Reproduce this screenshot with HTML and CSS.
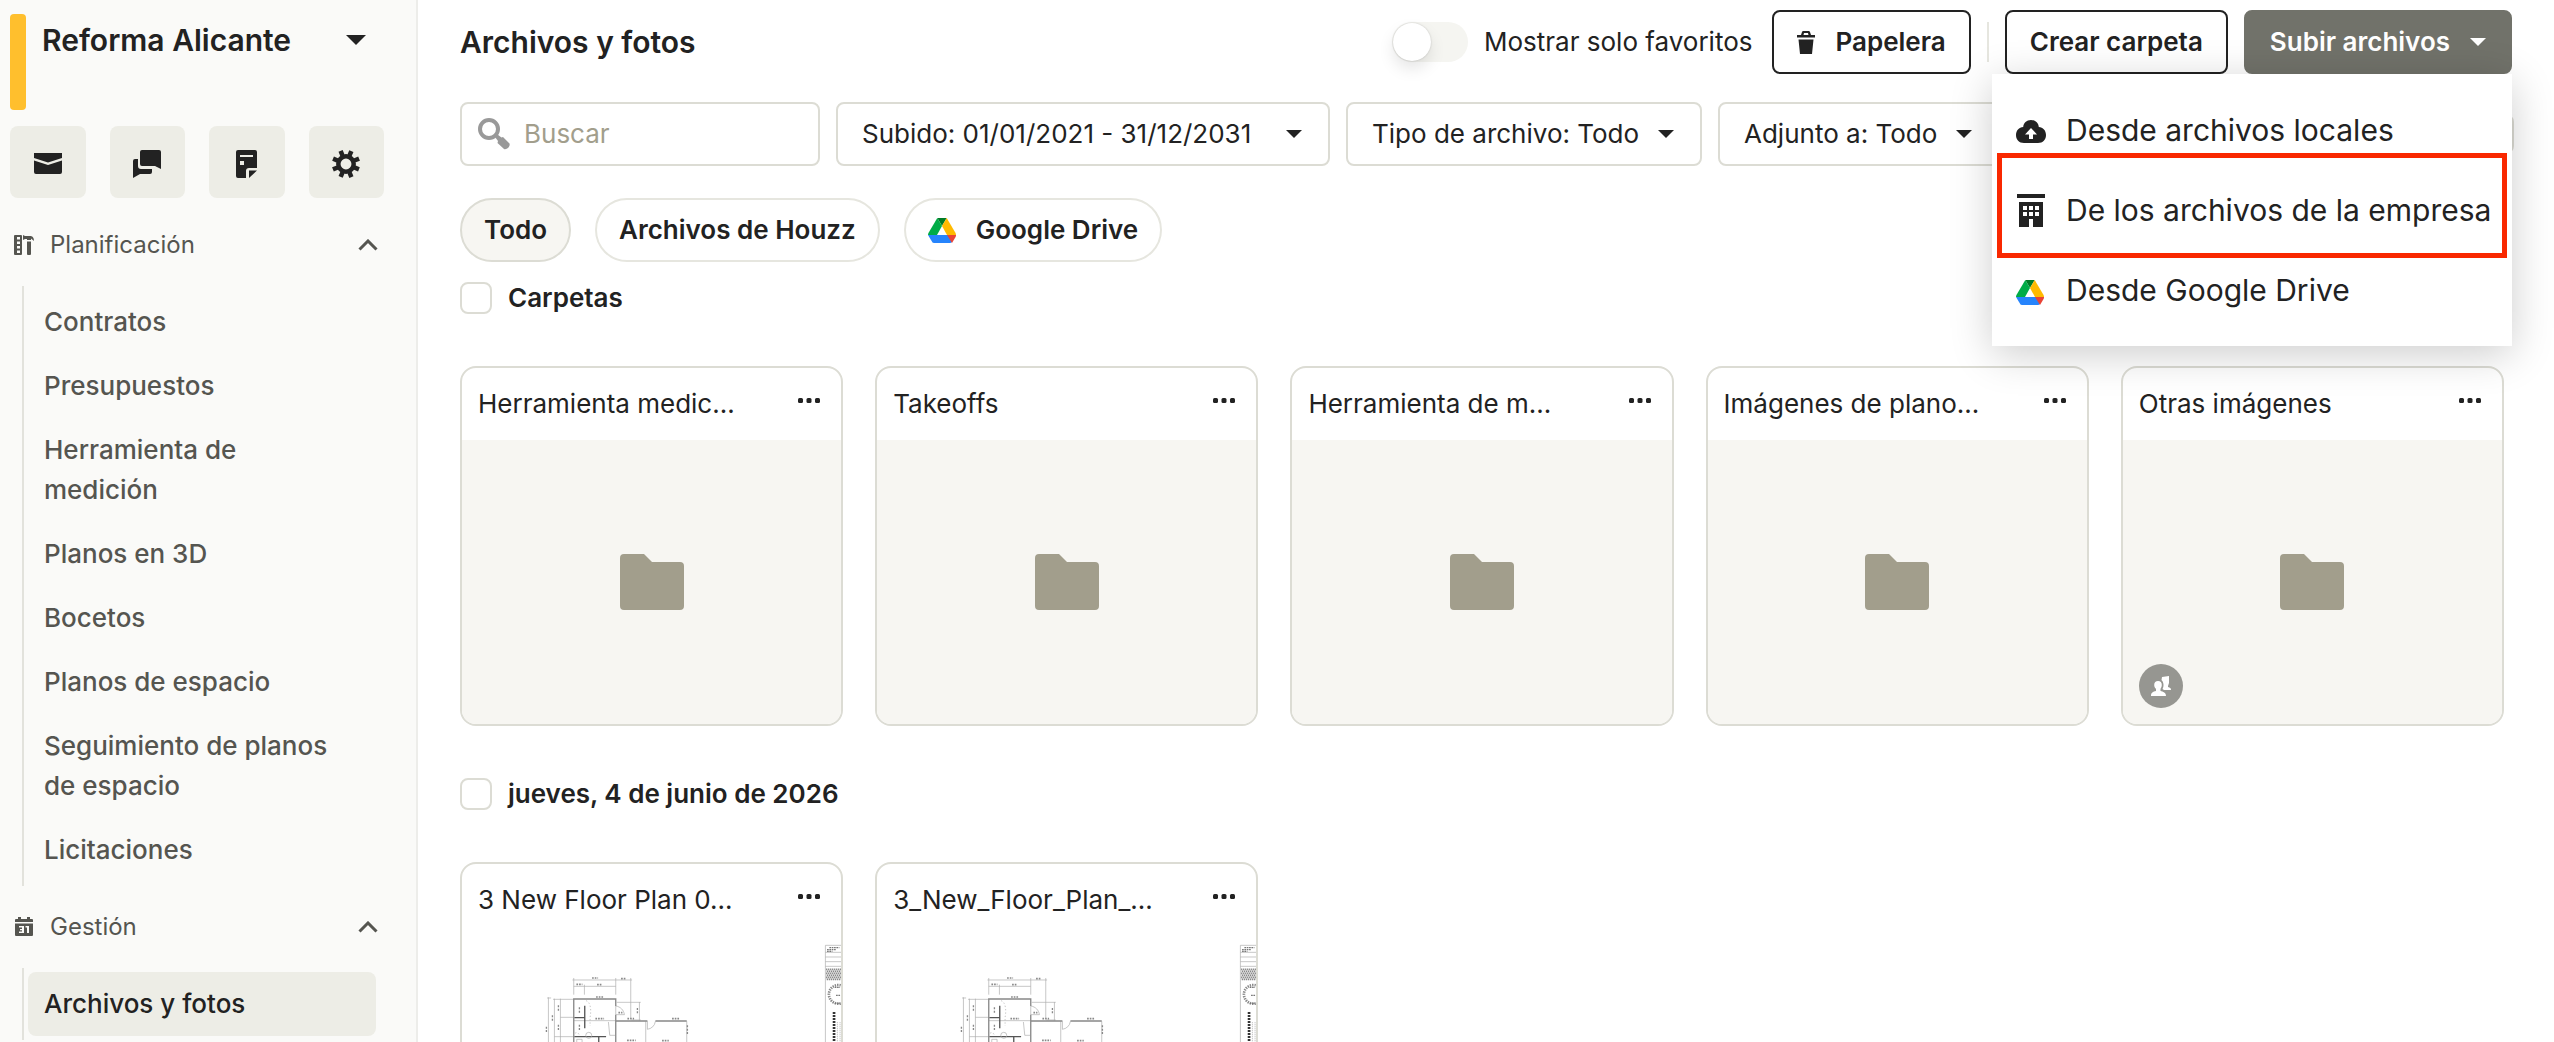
FILE: index.html
```html
<!DOCTYPE html>
<html lang="es">
<head>
    <meta charset="UTF-8">
    <meta name="viewport" content="width=device-width, initial-scale=1.0">
    <title>Archivos y fotos</title>
    <link rel="stylesheet" href="styles.css">
</head>
<body>
    <!-- Shared icons -->
    <svg class="sprite" aria-hidden="true">
        <symbol id="caret" viewBox="0 0 20 10"><path d="M0 0h20L10 10z"/></symbol>
        <symbol id="chevron-up" viewBox="0 0 20 12"><path d="M1.500 10.500L10 2l8.500 8.500" fill="none" stroke="currentColor" stroke-width="3"/></symbol>
        <symbol id="dots" viewBox="0 0 22 6"><rect width="5" height="5" rx="1.500"/><rect x="8.500" width="5" height="5" rx="1.500"/><rect x="17" width="5" height="5" rx="1.500"/></symbol>
        <symbol id="folder" viewBox="0 0 64 56"><path d="M4 0h20l8 8h28a4 4 0 0 1 4 4v40a4 4 0 0 1-4 4H4a4 4 0 0 1-4-4V4a4 4 0 0 1 4-4z"/></symbol>
        <symbol id="drive" viewBox="0 0 28 25">
            <path fill="#007a26" d="M9.300 0h9.400L14 8z"/>
            <path fill="#ffba00" d="M18.700 0l8.700 14.700c.4.700.6 1.300.6 2.300h-9L14 8z"/>
            <path fill="#00ac47" d="M9.300 0L14 8 9 17H0c0-1 .2-1.600.6-2.300z"/>
            <path fill="#2684fc" d="M0 17h28l-4.500 7.500c-.3.300-.7.500-1.500.5H6c-.8 0-1.200-.2-1.500-.5z"/>
            <path fill="#ea4335" d="M19 17h9c0 1-.2 1.500-.6 2.200L24 25z"/>
        </symbol>
        <symbol id="plan" viewBox="0 0 379 284">
            <g transform="scale(.3333) translate(-66 -528)" fill="none" stroke="#aaa" stroke-width="2">
                <path d="M401 654v50M527 654v50M572 654v120M433 674v30M397 660h179M401 679h126M325 712v140M343 716v140M361 716v140M321 714h12M339 718h62M361 772h40M343 830h58M598 726v56M530 727h72M574 780h28"/>
                <path d="M527 738v26h26c-2-14-12-24-26-26M622 784v24c12-2 22-10 24-24M505 786l4 40h16M740 784v62M617 784v62"/>
                <path d="M401 782h126"/>
                <path stroke="#888" stroke-width="4" d="M401 852V717h126v21M527 764v82M527 783h95M646 783h94"/>
                <path stroke="#555" stroke-width="4" d="M434 737v68M403 773h30M403 830h95M476 830v20"/>
                <path stroke="#888" stroke-width="5" stroke-dasharray="5 3" d="M456 654h18M543 656h14M409 673h18M471 674h16M468 711h22M466 776h26M562 776h20M696 776h22M561 841h26M666 842h20M535 758h12"/>
                <path stroke="#888" stroke-width="4" stroke-dasharray="6 4" d="M319 800v18M337 766v18M355 736v20M355 794v18M592 744v20M742 796v26M418 742v18M418 794v18"/>
                <path stroke-dasharray="4 6" d="M438 722c14 4 16 30 12 50v26M405 820c4-4 10-2 12 4"/>
                <circle cx="446" cy="826" r="9"/>
                <path d="M410 838h16v10h-16z"/>
                <path d="M1206 556h-50v296M1156 577h50M1156 591h50M1156 605h50M1156 619h50"/>
                <path stroke="#777" stroke-width="4" stroke-dasharray="5 2" d="M1168 563h30M1161 569h26M1161 574h16"/>
                <path stroke="#888" stroke-width="5" stroke-dasharray="4 2" d="M1158 628h48M1160 634h46M1158 640h48M1160 646h46M1158 652h48M1160 658h46"/>
                <path stroke="#888" stroke-width="8" stroke-dasharray="4 3" d="M1202 676a28 28 0 1 0 0 54"/>
                <path stroke="#777" stroke-width="4" stroke-dasharray="5 2" d="M1184 682h16M1188 706h14M1184 730h16"/>
                <path stroke="#333" stroke-width="8" stroke-dasharray="6 3" d="M1182 756v90"/>
                <path stroke-dasharray="4 2" d="M1192 786v60M1200 786v60"/>
            </g>
        </symbol>
    </svg>

    <div class="app">
        <aside class="sidebar">
            <div class="project">
                <span class="project-color"></span>
                <button class="project-name">
                    Reforma Alicante
                    <svg class="caret-large"><use href="#caret"/></svg>
                </button>
            </div>

            <div class="shortcuts">
                <button class="shortcut" aria-label="Correo">
                    <svg viewBox="0 0 28 28"><path d="M0 3h28v5l-14 4.500L0 8z"/><path d="M0 10.500L14 15l14-4.500V22a2 2 0 0 1-2 2H2a2 2 0 0 1-2-2z"/></svg>
                </button>
                <button class="shortcut" aria-label="Mensajes">
                    <svg viewBox="0 0 28 28"><path d="M9 0h17a2 2 0 0 1 2 2v17l-6-3H9a2 2 0 0 1-2-2V2a2 2 0 0 1 2-2z"/><path d="M5 9v7a3 3 0 0 0 3 3h11v3a2 2 0 0 1-2 2H7l-7 4V11a2 2 0 0 1 2-2z"/></svg>
                </button>
                <button class="shortcut" aria-label="Notas">
                    <svg viewBox="0 0 28 28"><path fill-rule="evenodd" d="M5 0h17a2 2 0 0 1 2 2v16h-8a3 3 0 0 0-3 3v7H5a2 2 0 0 1-2-2V2a2 2 0 0 1 2-2zM7 5v2h13V5zM7 11v4h4v-4z"/><path d="M16 20.500h8L16 28z"/></svg>
                </button>
                <button class="shortcut" aria-label="Ajustes">
                    <svg viewBox="0 0 28 28"><circle cx="14" cy="14" r="7.700" fill="none" stroke="currentColor" stroke-width="4.500"/><g fill="none" stroke="currentColor" stroke-width="4.500"><path d="M14 5V0M14 23v5M5 14H0M23 14h5M7.600 7.600L4 4M20.400 7.600L24 4M7.600 20.400L4 24M20.400 20.400L24 24" transform="rotate(22.500 14 14)"/></g></svg>
                </button>
            </div>

            <nav>
                <button class="section-head">
                    <svg class="section-icon" viewBox="0 0 20 20"><path fill-rule="evenodd" d="M1 0h6a1 1 0 0 1 1 1v18a1 1 0 0 1-1 1H1a1 1 0 0 1-1-1V1a1 1 0 0 1 1-1zM3 2v2.500h3V2zM3 6.500V9h3V6.500zM3 11v2.500h3V11zM3 15.500V18h3v-2.500z"/><path d="M9 0l2 1h5c2 0 4 1 4 5l-3-2.500V5h-4V4h-2L9 5zM13 6.500h4V19a1 1 0 0 1-1 1h-2a1 1 0 0 1-1-1z"/></svg>
                    Planificación
                    <svg class="chevron"><use href="#chevron-up"/></svg>
                </button>
                <ul class="section-items">
                    <li><a href="#">Contratos</a></li>
                    <li><a href="#">Presupuestos</a></li>
                    <li><a href="#">Herramienta de medición</a></li>
                    <li><a href="#">Planos en 3D</a></li>
                    <li><a href="#">Bocetos</a></li>
                    <li><a href="#">Planos de espacio</a></li>
                    <li><a href="#">Seguimiento de planos de espacio</a></li>
                    <li><a href="#">Licitaciones</a></li>
                </ul>

                <button class="section-head">
                    <svg class="section-icon" viewBox="0 0 20 20"><path d="M1 5V3a1 1 0 0 1 1-1h2V0h3v2h6V0h3v2h2a1 1 0 0 1 1 1v2z"/><path fill-rule="evenodd" d="M1 6.500h18V18a1 1 0 0 1-1 1H2a1 1 0 0 1-1-1zM5 9v1.500h3V12H6v1.200h2v1.300H5V16h5V9zM11.500 9v1.500H13V16h2V9z"/></svg>
                    Gestión
                    <svg class="chevron"><use href="#chevron-up"/></svg>
                </button>
                <ul class="section-items">
                    <li><a href="#" class="active">Archivos y fotos</a></li>
                </ul>
            </nav>
        </aside>

        <main class="main">
            <header class="topbar">
                <h1>Archivos y fotos</h1>
                <div class="actions">
                    <label class="toggle">
                        <input type="checkbox" role="switch">
                        Mostrar solo favoritos
                    </label>
                    <button class="btn">
                        <svg class="trash" viewBox="0 0 18 23"><path fill-rule="evenodd" d="M0 4h4l1-3a1.500 1.500 0 0 1 1.500-1h5A1.500 1.500 0 0 1 13 1l1 3h4v2.500H0zM6.500 4h5L11 2H7zM1.500 8.500h15L15 23H3z"/></svg>
                        Papelera
                    </button>
                    <span class="divider"></span>
                    <button class="btn">Crear carpeta</button>
                    <div class="upload">
                        <button class="btn btn-primary" aria-expanded="true">
                            Subir archivos
                            <svg class="caret"><use href="#caret"/></svg>
                        </button>
                        <div class="menu">
                            <button class="menu-item">
                                <svg viewBox="0 -2 30 34"><path fill-rule="evenodd" d="M15 5c4.500 0 7.500 3 7.800 7C27 12.500 30 15.500 30 20c0 4.500-3 8-8 8H8c-5 0-8-3.500-8-8 0-4.500 3-7.500 7.200-8C7.500 8 10.500 5 15 5zM15 13l-6 6.500h4V24h4v-4.500h4z"/></svg>
                                Desde archivos locales
                            </button>
                            <button class="menu-item highlighted">
                                <svg viewBox="0 0 30 34"><path fill-rule="evenodd" d="M1 1h28v4H1zM3 9h24v25H17v-8h-4v8H3zM7 13v4h4v-4zM13 13v4h4v-4zM19 13v4h4v-4zM7 19v4h4v-4zM13 19v4h4v-4zM19 19v4h4v-4z"/></svg>
                                De los archivos de la empresa
                            </button>
                            <button class="menu-item">
                                <svg viewBox="0 -7 30 34"><use href="#drive" width="28" height="25"/></svg>
                                Desde Google Drive
                            </button>
                        </div>
                    </div>
                </div>
            </header>

            <div class="filters">
                <label class="search">
                    <svg viewBox="0 0 32 32"><circle cx="11" cy="11" r="9" fill="none" stroke="currentColor" stroke-width="4"/><path d="M17 19l2.500-2.500 4 3 1.500-.5 6.500 6.500c1 3-2.500 6.500-5.500 5.500L19.500 25l.5-2z"/></svg>
                    <input type="text" placeholder="Buscar" aria-label="Buscar">
                </label>
                <select class="filter filter-date" aria-label="Subido">
                    <option>Subido: 01/01/2021 - 31/12/2031</option>
                </select>
                <select class="filter" aria-label="Tipo de archivo">
                    <option>Tipo de archivo: Todo</option>
                </select>
                <select class="filter" aria-label="Adjunto a">
                    <option>Adjunto a: Todo</option>
                </select>
                <button class="view-mode" aria-label="Vista"></button>
            </div>

            <div class="chips">
                <button class="chip selected">Todo</button>
                <button class="chip">Archivos de Houzz</button>
                <button class="chip"><svg><use href="#drive"/></svg>Google Drive</button>
            </div>

            <label class="group-title"><input type="checkbox">Carpetas</label>
            <div class="cards">
                <article class="card">
                    <div class="card-head">Herramienta medic...<button class="more" aria-label="Más"><svg><use href="#dots"/></svg></button></div>
                    <div class="card-body"><svg class="folder"><use href="#folder"/></svg></div>
                </article>
                <article class="card">
                    <div class="card-head">Takeoffs<button class="more" aria-label="Más"><svg><use href="#dots"/></svg></button></div>
                    <div class="card-body"><svg class="folder"><use href="#folder"/></svg></div>
                </article>
                <article class="card">
                    <div class="card-head">Herramienta de m...<button class="more" aria-label="Más"><svg><use href="#dots"/></svg></button></div>
                    <div class="card-body"><svg class="folder"><use href="#folder"/></svg></div>
                </article>
                <article class="card">
                    <div class="card-head">Imágenes de plano...<button class="more" aria-label="Más"><svg><use href="#dots"/></svg></button></div>
                    <div class="card-body"><svg class="folder"><use href="#folder"/></svg></div>
                </article>
                <article class="card">
                    <div class="card-head">Otras imágenes<button class="more" aria-label="Más"><svg><use href="#dots"/></svg></button></div>
                    <div class="card-body">
                        <svg class="folder"><use href="#folder"/></svg>
                        <span class="shared"><svg viewBox="0 0 20 20"><path d="M7 5c2.500 0 3.800 1.500 3.800 4 0 2-.8 3-1.300 3.800V15c2.500.5 5.500 1.500 5.500 5H0c0-3.500 2-4.500 5-5v-2.200C4 12 3.200 11 3.200 9c0-2.500 1.500-4 3.800-4z"/><path d="M11 1l7-1v7l-1 3v1c2 .5 3 1 3 3h-7l-1.500-1C13 11 13 6 10.500 4z"/></svg></span>
                    </div>
                </article>
            </div>

            <label class="group-title"><input type="checkbox">jueves, 4 de junio de 2026</label>
            <div class="cards">
                <article class="card">
                    <div class="card-head">3 New Floor Plan 0...<button class="more" aria-label="Más"><svg><use href="#dots"/></svg></button></div>
                    <div class="card-body card-image"><svg class="plan"><use href="#plan"/></svg></div>
                </article>
                <article class="card">
                    <div class="card-head">3_New_Floor_Plan_...<button class="more" aria-label="Más"><svg><use href="#dots"/></svg></button></div>
                    <div class="card-body card-image"><svg class="plan"><use href="#plan"/></svg></div>
                </article>
            </div>
        </main>
    </div>
</body>
</html>
```

FILE: styles.css
```css
* {
    box-sizing: border-box;
}

body {
    margin: 0;
    font-family: Inter, "Liberation Sans", sans-serif;
    font-size: 26px;
    line-height: 40px;
    color: #222;
    background: #fff;
}

button, input, select {
    font: inherit;
    color: inherit;
}

button {
    border: 0;
    padding: 0;
    background: none;
    cursor: pointer;
}

svg {
    display: block;
    flex: none;
    fill: currentColor;
}

.sprite {
    position: absolute;
    width: 0;
    height: 0;
}

.app {
    display: flex;
    height: 100vh;
    overflow: hidden;
}

/* Sidebar */
.sidebar {
    flex: none;
    width: 418px;
    padding: 14px 32px 0 10px;
    border-right: 2px solid #ededea;
    background: #fafaf8;
}

.project {
    display: flex;
    gap: 16px;
    height: 96px;
}

.project-color {
    width: 16px;
    border-radius: 4px;
    background: #ffbf2d;
}

.project-name {
    display: flex;
    flex: 1;
    align-items: center;
    justify-content: space-between;
    height: 52px;
    padding-right: 18px;
    font-size: 30px;
    font-weight: 600;
}

.caret-large {
    width: 20px;
    height: 10px;
}

.shortcuts {
    display: grid;
    grid-template-columns: repeat(4, 1fr);
    gap: 24px;
    margin-top: 16px;
}

.shortcut {
    display: flex;
    align-items: center;
    justify-content: center;
    height: 72px;
    padding-top: 4px;
    border-radius: 8px;
    background: #ededE6;
}

.shortcut svg {
    width: 28px;
    height: 28px;
}

.section-head {
    display: flex;
    align-items: center;
    gap: 16px;
    width: 100%;
    height: 82px;
    padding: 0 6px 0 4px;
    font-size: 24px;
    color: #555550;
}

.shortcuts + nav {
    margin-top: 6px;
}

.section-icon {
    width: 20px;
    height: 20px;
}

.chevron {
    width: 20px;
    height: 12px;
    margin-left: auto;
}

.section-items {
    list-style: none;
    margin: 0 8px 0 12px;
    padding: 4px 0 4px 4px;
    border-left: 2px solid #e2e2dc;
}

.section-items a {
    display: block;
    padding: 12px 32px 12px 16px;
    border-radius: 8px;
    font-weight: 500;
    color: #555550;
    text-decoration: none;
}

.section-items .active {
    color: #222;
    background: #ededE6;
}

/* Main column */
.main {
    flex: 1;
    min-width: 0;
    padding: 10px 42px 0 42px;
}

.topbar {
    display: flex;
    align-items: center;
    justify-content: space-between;
}

h1 {
    margin: 0;
    font-size: 30px;
    font-weight: 600;
}

.actions {
    display: flex;
    align-items: center;
    gap: 16px;
}

.toggle {
    display: flex;
    align-items: center;
    gap: 16px;
    margin-right: 4px;
}

.toggle input {
    appearance: none;
    display: flex;
    width: 76px;
    height: 40px;
    margin: 0;
    border-radius: 20px;
    background: #f5f5f1;
}

.toggle input::before {
    content: "";
    width: 38px;
    height: 38px;
    margin: 1px;
    border-radius: 50%;
    background: #fff;
    box-shadow: 0 0 2px rgba(0,0,0,0.2), 0 8px 16px rgba(0,0,0,0.1);
}

.btn {
    display: flex;
    align-items: center;
    gap: 20px;
    height: 64px;
    padding: 0 23px;
    border: 2px solid #222;
    border-radius: 8px;
    font-weight: 600;
    background: #fff;
}

.btn-primary {
    padding: 0 24px;
    border-color: #71726a;
    color: #fff;
    background: #71726a;
}

.trash {
    width: 18px;
    height: 23px;
}

.caret {
    width: 16px;
    height: 8px;
}

.divider {
    width: 2px;
    height: 40px;
    background: #e6e6df;
}

.upload {
    position: relative;
}

.menu {
    position: absolute;
    z-index: 2;
    top: 100%;
    right: 0;
    width: 520px;
    padding: 16px 0;
    background: #fff;
    box-shadow: 0 8px 40px rgba(0,0,0,0.2);
}

.menu-item {
    position: relative;
    display: flex;
    align-items: center;
    gap: 20px;
    width: 100%;
    height: 80px;
    padding: 0 24px;
    font-size: 30px;
    white-space: nowrap;
}

.menu-item svg {
    width: 30px;
    height: 34px;
}

.highlighted::after {
    content: "";
    position: absolute;
    inset: -17px 5px -8px;
    border: 5px solid #f92800;
}

/* Filters */
.filters {
    display: flex;
    gap: 16px;
    margin-top: 28px;
}

.search, .filter {
    height: 64px;
    border: 2px solid #dcdcd4;
    border-radius: 8px;
    background: #fff;
}

.search {
    display: flex;
    align-items: center;
    gap: 14px;
    width: 360px;
    padding: 0 16px;
}

.search svg {
    width: 32px;
    height: 32px;
    color: #999;
}

.search input {
    width: 100%;
    min-width: 0;
    padding: 0;
    border: 0;
    outline: 0;
    background: none;
}

.search input::placeholder {
    color: #a29e8c;
}

.filter {
    appearance: none;
    padding: 0 60px 0 24px;
    background: #fff url("data:image/svg+xml,%3Csvg xmlns='http://www.w3.org/2000/svg' width='16' height='8'%3E%3Cpath d='M0 0h16L8 8z' fill='%23222'/%3E%3C/svg%3E") no-repeat right 26px center;
}

.filter-date {
    min-width: 494px;
}

.view-mode {
    width: 64px;
    height: 40px;
    align-self: center;
    margin: 0 -2px 0 auto;
    border: 2px solid #dcdcd4;
    border-radius: 8px;
}

.chips {
    display: flex;
    gap: 24px;
    margin-top: 32px;
}

.chip {
    display: flex;
    align-items: center;
    gap: 20px;
    height: 64px;
    padding: 0 22px;
    border: 2px solid #e6e6df;
    border-radius: 32px;
    font-weight: 600;
}

.chip.selected {
    border-color: #dcdcd4;
    background: #f7f6f2;
}

.chip svg {
    width: 28px;
    height: 25px;
}

/* File groups */
.group-title {
    display: flex;
    align-items: center;
    gap: 16px;
    margin: 16px 0 48px;
    font-weight: 600;
}

.group-title input {
    appearance: none;
    width: 32px;
    height: 32px;
    margin: 0;
    border: 2px solid #dcdcd4;
    border-radius: 8px;
    background: #fff;
}

.cards {
    display: grid;
    grid-template-columns: repeat(5, 1fr);
    gap: 32px;
    padding-right: 8px;
}

.cards + .group-title {
    margin-top: 48px;
}

.card {
    height: 360px;
    border: 2px solid #dcdcd4;
    border-radius: 16px;
    overflow: hidden;
}

.card-head {
    display: flex;
    justify-content: space-between;
    height: 72px;
    padding: 16px 21px 16px 16px;
    white-space: nowrap;
}

.more {
    display: flex;
    height: 34px;
    align-items: center;
}

.more svg {
    width: 22px;
    height: 6px;
}

.card-body {
    position: relative;
    display: flex;
    align-items: center;
    justify-content: center;
    height: 284px;
    background: #f7f6f2;
}

.card-image {
    background: #fff;
}

.folder {
    width: 64px;
    height: 56px;
    color: #a29e8c;
}

.plan {
    width: 100%;
    height: 100%;
}

.shared {
    position: absolute;
    left: 16px;
    bottom: 16px;
    display: flex;
    align-items: center;
    justify-content: center;
    width: 44px;
    height: 44px;
    border-radius: 50%;
    color: #fff;
    background: #969691;
}

.shared svg {
    width: 20px;
    height: 20px;
}
```
